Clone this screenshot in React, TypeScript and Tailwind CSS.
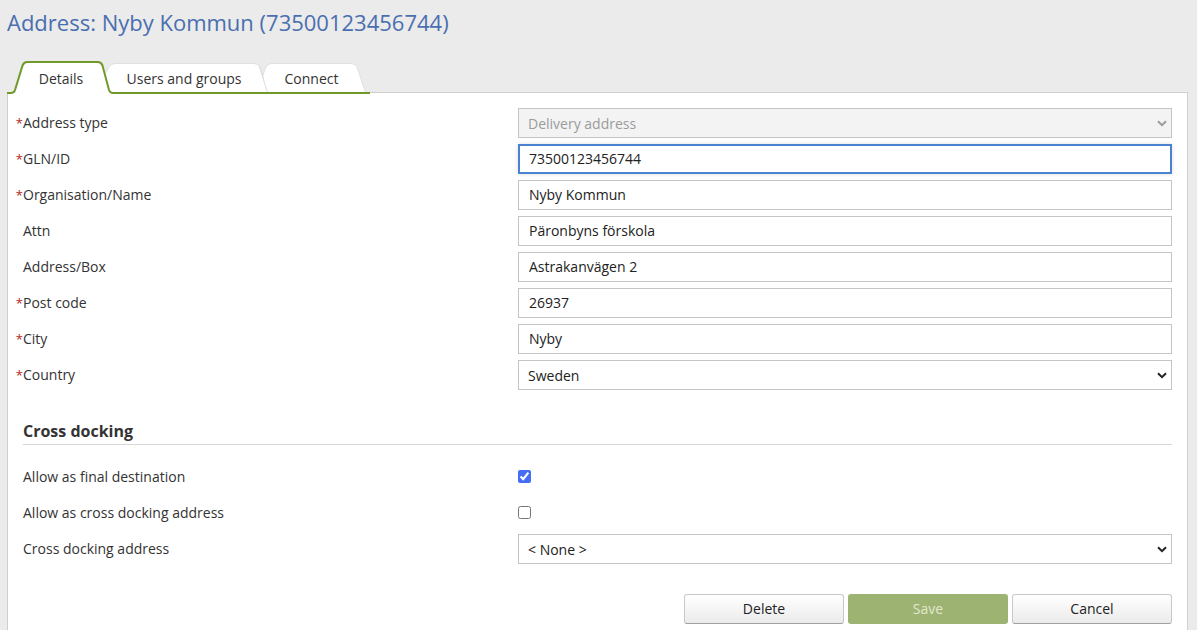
import { useState, type ReactNode } from 'react';

const control =
  'h-[30px] w-full min-w-0 rounded-none border border-[#c4c4c4] bg-white text-sm text-[#222222] outline-none focus:outline-none';

function Row({ id, label, required, children }: { id: string; label: string; required?: boolean; children: ReactNode }) {
  return (
    <div className="grid min-h-[30px] grid-cols-[495fr_654fr] items-center">
      <label htmlFor={id} className="relative text-sm leading-5">
        {required && <span className="absolute right-full text-[13px] text-[#b5281e]">*</span>}
        {label}
      </label>
      {children}
    </div>
  );
}

function TextRow({ id, label, required, value, active }: { id: string; label: string; required?: boolean; value: string; active?: boolean }) {
  return (
    <Row id={id} label={label} required={required}>
      <input
        id={id}
        type="text"
        defaultValue={value}
        className={
          active
            ? 'h-[30px] w-full min-w-0 border-2 border-[#4b83d1] bg-white px-[9px] pb-[2px] text-sm text-[#222222] shadow-[0_0_4px_rgba(0,0,0,0.15)] outline-none'
            : `${control} px-[10px] pb-[2px]`
        }
      />
    </Row>
  );
}

function SelectRow({ id, label, required, value, disabled }: { id: string; label: string; required?: boolean; value: string; disabled?: boolean }) {
  return (
    <Row id={id} label={label} required={required}>
      <div className="relative">
        <select
          id={id}
          disabled={disabled}
          className={`${control} block appearance-none pt-[2px] pr-8 pl-[9px] disabled:bg-[#f3f3f3] disabled:text-[#9b9b9b] disabled:opacity-100`}
        >
          <option>{value}</option>
        </select>
        <svg
          viewBox="0 0 10 7"
          className={
            disabled
              ? 'pointer-events-none absolute top-3 right-[5px] h-[7px] w-[10px] text-[#9b9b9b]'
              : 'pointer-events-none absolute top-3 right-[5px] h-[7px] w-[10px] text-[#222222]'
          }
        >
          <path d="M1 1.2 5 5.2 9 1.2" fill="none" stroke="currentColor" strokeWidth="2" />
        </svg>
      </div>
    </Row>
  );
}

function TabShapes() {
  return (
    <svg viewBox="0 0 363 34" className="absolute top-0 left-0 h-[34px] w-[363px]" aria-hidden="true">
      <path d="M250 34 258 9Q260 3.500 264 3.500H344Q348 3.500 350 7L359 34Z" fill="#fff" stroke="#e0e0e0" />
      <path d="M98 34V14L102 7Q104 3.500 108 3.500H247Q251 3.500 253 7L261 34Z" fill="#fff" stroke="#e0e0e0" />
      <path d="M252.500 33 257.500 17 261.500 33Z" fill="#fff" />
      <path d="M252.500 7 261 34" fill="none" stroke="#dcdcdc" />
      <path d="M8 34 17 5Q18 2 21 2H92Q95 2 96 5L105 34Z" fill="#fff" />
      <path
        d="M0 33H4Q7 33 8 30L15.500 5.500Q17 2 20 2H91Q94 2 95.500 5.500L102 30Q103 33 106 33H363"
        fill="none"
        stroke="#6f9a29"
        strokeWidth="2"
      />
    </svg>
  );
}

const plainButton =
  'h-[30px] w-40 rounded-[3px] border border-[#c8c8c8] border-b-[#a0a0a0] bg-linear-to-b from-white to-[#ebebeb] text-sm text-[#222222]';

export default function App() {
  const [final, setFinal] = useState(true);
  const [cross, setCross] = useState(false);
  return (
    <main className="flex min-h-screen flex-col bg-[#ebebeb] pr-[9px] pl-[7px] font-['Open_Sans','Noto_Sans',sans-serif] text-[#333333]">
      <h1 className="pt-[7px] text-[22px] leading-[30px] text-[#4a6fb0]">Address: Nyby Kommun (73500123456744)</h1>

      <nav role="tablist" className="relative z-10 mt-[23px] -mb-[2px] flex h-[34px] w-[363px]">
        <TabShapes />
        <button type="button" role="tab" aria-selected="true" className="relative w-[108px] pt-[3px] text-sm">Details</button>
        <button type="button" role="tab" aria-selected="false" className="relative w-[138px] pt-[3px] text-sm">Users and groups</button>
        <button type="button" role="tab" aria-selected="false" className="relative w-[117px] pt-[3px] text-sm">Connect</button>
      </nav>

      <form
        className="flex-1 border border-b-0 border-[#cfcfcf] bg-white px-[15px] pt-[15px] pb-[6px]"
        onSubmit={(e) => e.preventDefault()}
      >
        <div className="flex flex-col gap-[6px]">
          <SelectRow id="type" label="Address type" required value="Delivery address" disabled />
          <TextRow id="gln" label="GLN/ID" required value="73500123456744" active />
          <TextRow id="name" label="Organisation/Name" required value="Nyby Kommun" />
          <TextRow id="attn" label="Attn" value="Päronbyns förskola" />
          <TextRow id="box" label="Address/Box" value="Astrakanvägen 2" />
          <TextRow id="post" label="Post code" required value="26937" />
          <TextRow id="city" label="City" required value="Nyby" />
          <SelectRow id="country" label="Country" required value="Sweden" />
        </div>

        <h2 className="mt-[29px] border-b border-[#d6d6d6] pb-px text-base leading-6 font-bold">Cross docking</h2>

        <div className="mt-[17px] flex flex-col gap-[6px]">
          <Row id="final" label="Allow as final destination">
            <input id="final" type="checkbox" checked={final} onChange={(e) => setFinal(e.target.checked)} className="mb-[2px] size-[13px] accent-[#456ef5]" />
          </Row>
          <Row id="cross" label="Allow as cross docking address">
            <input id="cross" type="checkbox" checked={cross} onChange={(e) => setCross(e.target.checked)} className="mb-[2px] size-[13px] accent-[#456ef5]" />
          </Row>
          <SelectRow id="dock" label="Cross docking address" value="< None >" />
        </div>

        <div className="mt-[30px] flex justify-end gap-1">
          <button type="button" className={plainButton}>Delete</button>
          <button type="submit" disabled className="h-[30px] w-40 rounded-[3px] bg-[#9db372] text-sm text-[#e0e8d0]">Save</button>
          <button type="button" className={plainButton}>Cancel</button>
        </div>
      </form>
    </main>
  );
}
